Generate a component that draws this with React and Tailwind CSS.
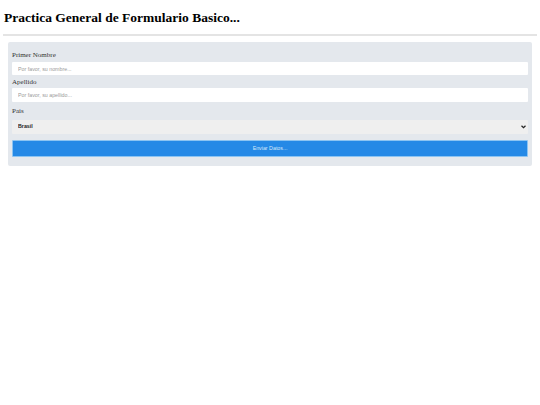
import React from "react";

export default function App() {
  return (
    <div className="w-[540px] h-[405px] bg-white" style={{ fontFamily: '"Liberation Serif", serif' }}>
      <h1 className="pt-[9px] pl-1 text-[13.5px] leading-[17px] font-bold text-black" style={{ fontFamily: '"Liberation Serif", serif' }}>
        Practica General de Formulario Basico...
      </h1>
      <div className="mt-[8px] mx-[3px] h-[2px] bg-[#e4e4e4]" />
      <form
        className="mt-[6px] mx-2 rounded-[2px] bg-[#e4e8ed] px-1 pt-[8px] pb-[9px] flex flex-col"
        onSubmit={(e) => e.preventDefault()}
      >
        <label className="block h-[10px] text-[7px] font-normal leading-[10px] text-[#333] mb-[2px]">Primer Nombre</label>
        <input
          type="text"
          placeholder="Por favor, su nombre..."
          className="block w-full h-[13px] bg-white rounded-[1px] pl-[6px] text-[5.3px] outline-none placeholder:text-[#9a9a9a]"
          style={{ fontFamily: '"Liberation Sans", sans-serif' }}
        />
        <label className="block h-[10px] text-[7px] font-normal leading-[10px] text-[#333] mt-[2px] mb-[1px]">Apellido</label>
        <input
          type="text"
          placeholder="Por favor, su apellido..."
          className="block w-full h-[14px] bg-white rounded-[1px] pl-[6px] text-[5.3px] outline-none placeholder:text-[#9a9a9a]"
          style={{ fontFamily: '"Liberation Sans", sans-serif' }}
        />
        <label className="block h-[10px] text-[7px] font-normal leading-[10px] text-[#333] mt-[4px] mb-[4px]">Pais</label>
        <div className="relative h-[14px]">
          <select
            defaultValue="Brasil"
            className="appearance-none block w-full h-[14px] bg-[#efefef] rounded-[1px] pl-[6px] text-[5.3px] font-bold text-[#222] outline-none"
            style={{ fontFamily: '"Liberation Sans", sans-serif' }}
          >
            <option>Brasil</option>
            <option>Argentina</option>
            <option>Chile</option>
          </select>
          <svg
            className="absolute right-[2px] top-[5px] pointer-events-none"
            width="5"
            height="4"
            viewBox="0 0 10 8"
          >
            <path d="M1 1.5 L5 5.5 L9 1.5" fill="none" stroke="#222" strokeWidth="2.4" />
          </svg>
        </div>
        <button
          type="submit"
          className="mt-[6px] h-[17px] w-full bg-[#2589e6] border border-[#8cc4f2] rounded-[1px] text-[5.3px] text-[#d6e8fa]"
          style={{ fontFamily: '"Liberation Sans", sans-serif' }}
        >
          Enviar Datos...
        </button>
      </form>
    </div>
  );
}
